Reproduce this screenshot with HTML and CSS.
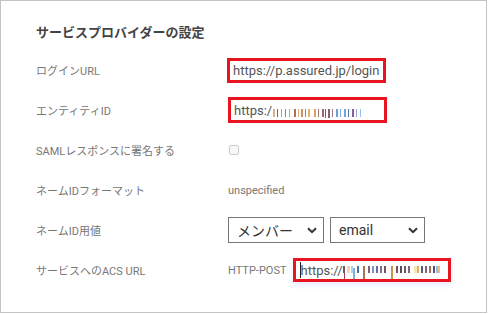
FILE: index.html
```html
<!DOCTYPE html>
<html lang="ja">
<head>
<meta charset="utf-8">
<link rel="stylesheet" href="styles.css">
</head>
<body>
<div class="panel">
  <h2 class="title">サービスプロバイダーの設定</h2>
  <div class="grid">
    <div class="label">ログインURL</div>
    <div class="value">
      <div class="field field-login"><span class="txt">https://p.assured.jp/login</span></div>
    </div>

    <div class="label">エンティティID</div>
    <div class="value">
      <div class="field field-entity"><span class="txt">https:/</span><svg class="blur" width="104" height="12" viewBox="0 0 104 12">
        <rect x="1" y="3" width="2" height="8" fill="#e0b080"/>
        <rect x="5" y="3" width="1" height="8" fill="#8a6a5a"/>
        <rect x="9" y="3" width="1" height="8" fill="#c89a70"/>
        <rect x="13" y="3" width="1" height="8" fill="#a07a6a"/>
        <rect x="17" y="3" width="1" height="8" fill="#c8a080"/>
        <rect x="22" y="3" width="2" height="8" fill="#b07050"/>
        <rect x="26" y="3" width="1" height="8" fill="#e0b080"/>
        <rect x="29" y="3" width="2" height="8" fill="#d09060"/>
        <rect x="33" y="3" width="1" height="8" fill="#c08060"/>
        <rect x="36" y="3" width="2" height="8" fill="#e8b070"/>
        <rect x="42" y="3" width="2" height="8" fill="#d8a070"/>
        <rect x="46" y="3" width="1" height="8" fill="#9a7a6a"/>
        <rect x="50" y="3" width="2" height="8" fill="#a06070"/>
        <rect x="53" y="3" width="1" height="9" fill="#7a5a6a"/>
        <rect x="56" y="3" width="2" height="9" fill="#8a6070"/>
        <rect x="60" y="3" width="1" height="8" fill="#a08080"/>
        <rect x="64" y="3" width="2" height="8" fill="#6aa0d0"/>
        <rect x="68" y="3" width="1" height="8" fill="#80b0e0"/>
        <rect x="72" y="3" width="2" height="8" fill="#70a8d8"/>
        <rect x="76" y="3" width="1" height="8" fill="#6070a0"/>
        <rect x="80" y="3" width="2" height="8" fill="#8060a0"/>
        <rect x="84" y="3" width="1" height="8" fill="#b0a0d0"/>
        <rect x="88" y="3" width="1" height="8" fill="#90c8f0"/>
      </svg></div>
    </div>

    <div class="label">SAMLレスポンスに署名する</div>
    <div class="value"><span class="checkbox"></span></div>

    <div class="label">ネームIDフォーマット</div>
    <div class="value"><span class="small">unspecified</span></div>

    <div class="label">ネームID用値</div>
    <div class="value selects">
      <div class="select sel-member"><span>メンバー</span><svg class="chev" width="10" height="7" viewBox="0 0 10 7"><path d="M1 1.2 L5 5.2 L9 1.2" fill="none" stroke="#333" stroke-width="2"/></svg></div>
      <div class="select sel-email"><span>email</span><svg class="chev" width="10" height="7" viewBox="0 0 10 7"><path d="M1 1.2 L5 5.2 L9 1.2" fill="none" stroke="#333" stroke-width="2"/></svg></div>
    </div>

    <div class="label">サービスへのACS URL</div>
    <div class="value acs">
      <span class="small">HTTP-POST</span>
      <div class="field field-acs"><span class="caret"></span><span class="txt">https://</span><svg class="blur" width="106" height="18" viewBox="0 0 106 18">
        <rect x="0" y="0" width="2" height="7" fill="#7a5060"/>
        <rect x="1" y="7" width="1" height="7" fill="#a04060"/>
        <rect x="4" y="0" width="3" height="7" fill="#f0d8a0"/>
        <rect x="8" y="0" width="2" height="7" fill="#b0d0e8"/>
        <rect x="10" y="2" width="2" height="13" fill="#80b0e0"/>
        <rect x="14" y="0" width="2" height="7" fill="#5070a0"/>
        <rect x="20" y="0" width="2" height="13" fill="#b07050"/>
        <rect x="25" y="0" width="2" height="7" fill="#806070"/>
        <rect x="29" y="0" width="2" height="7" fill="#8090c0"/>
        <rect x="33" y="0" width="2" height="7" fill="#6070a0"/>
        <rect x="37" y="0" width="2" height="7" fill="#8a6a80"/>
        <rect x="41" y="0" width="2" height="7" fill="#7a5060"/>
        <rect x="48" y="0" width="2" height="13" fill="#d09050"/>
        <rect x="53" y="0" width="2" height="7" fill="#7a5060"/>
        <rect x="57" y="0" width="2" height="7" fill="#5a4a5a"/>
        <rect x="61" y="0" width="2" height="7" fill="#6a5a6a"/>
        <rect x="65" y="0" width="2" height="7" fill="#8a6070"/>
        <rect x="71" y="0" width="3" height="7" fill="#f8e8b0"/>
        <rect x="74" y="0" width="2" height="7" fill="#e0b070"/>
        <rect x="78" y="0" width="2" height="7" fill="#5a5a7a"/>
        <rect x="82" y="0" width="2" height="7" fill="#8a6070"/>
        <rect x="86" y="0" width="2" height="7" fill="#a07060"/>
        <rect x="90" y="0" width="2" height="7" fill="#604a7a"/>
        <rect x="93" y="0" width="2" height="7" fill="#90c0e8"/>
        <rect x="95" y="0" width="2" height="7" fill="#e8c080"/>
      </svg></div>
    </div>
  </div>
</div>
</body>
</html>
```

FILE: styles.css
```css
html, body {
  margin: 0;
  padding: 0;
  background: #fff;
}

.panel {
  box-sizing: border-box;
  width: 487px;
  height: 313px;
  border: 1px solid #c4c4c4;
  padding: 22px 0 0 35px;
  font-family: Roboto, "Noto Sans CJK JP", sans-serif;
}

.title {
  margin: 0 0 7px 0;
  font-size: 13px;
  line-height: 20px;
  font-weight: 700;
  color: #444;
}

.grid {
  display: grid;
  grid-template-columns: 192px 1fr;
  grid-auto-rows: 40px;
}

.label {
  display: flex;
  align-items: center;
  font-size: 11px;
  color: #777;
}

.value {
  display: flex;
  align-items: center;
}

.field {
  box-sizing: border-box;
  display: flex;
  align-items: center;
  border: 3px solid #e8141f;
  background: #fff;
  padding-left: 3px;
  overflow: hidden;
}

.txt {
  font-size: 13px;
  color: #555;
  white-space: nowrap;
}

.field-login {
  width: 159px;
  height: 25px;
  margin-left: -1px;
}

.field-entity {
  width: 159px;
  height: 26px;
}

.blur {
  display: block;
  flex: none;
}

.field-entity .blur {
  margin-top: 3px;
}

.checkbox {
  box-sizing: border-box;
  width: 10px;
  height: 10px;
  margin-left: 1px;
  border: 1px solid #ccc;
  border-radius: 2px;
  background: #f7f7f7;
}

.small {
  font-size: 11px;
  color: #777;
}

.selects {
  gap: 6px;
}

.select {
  box-sizing: border-box;
  height: 26px;
  border: 1px solid #767676;
  display: flex;
  align-items: center;
  justify-content: space-between;
  padding: 0 6px 0 8px;
  font-size: 14px;
  color: #333;
}

.sel-member {
  width: 96px;
}

.sel-email {
  width: 95px;
}

.chev {
  display: block;
}

.acs {
  gap: 6px;
}

.field-acs {
  width: 158px;
  height: 24px;
  padding-left: 4px;
  box-shadow: 0 3px 6px rgba(120, 140, 255, 0.18);
}

.caret {
  width: 1px;
  height: 16px;
  background: #222;
  flex: none;
}

.field-acs .blur {
  margin-top: 9px;
}
```
